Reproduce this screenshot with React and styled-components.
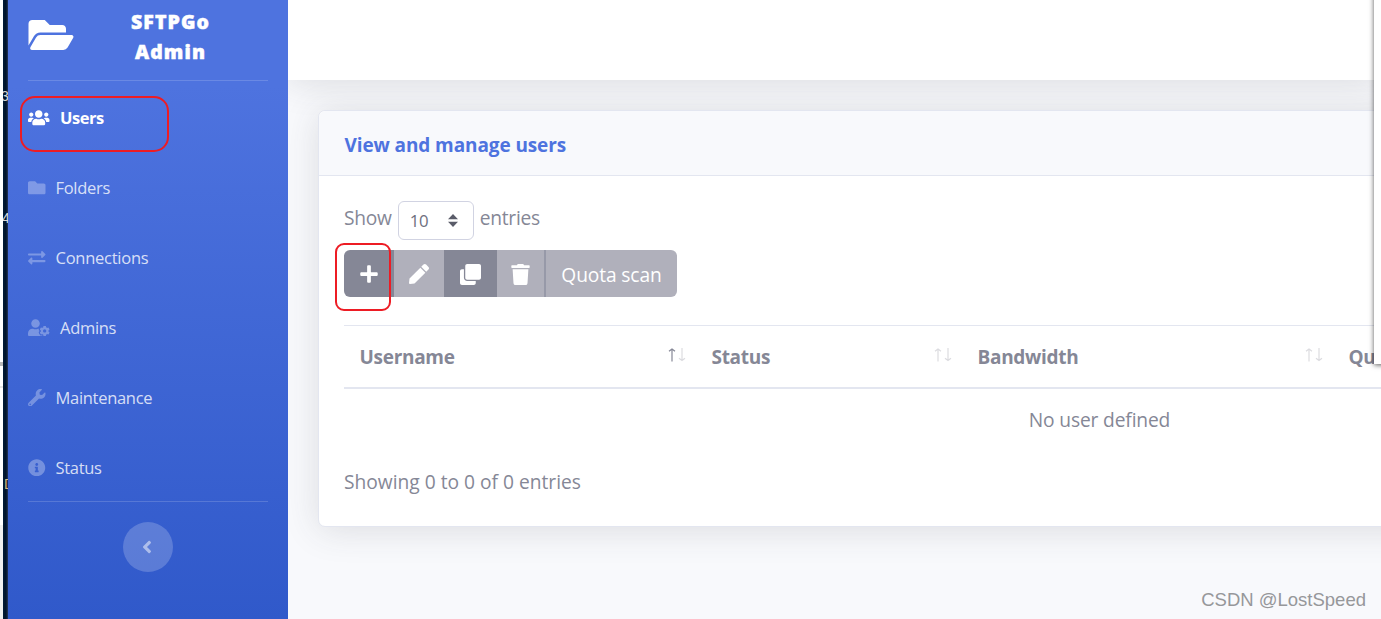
import React from "react";
import styled, { createGlobalStyle } from "styled-components";
import {
  FaFolderOpen, FaUsers, FaFolder, FaExchangeAlt, FaUserCog, FaWrench,
  FaInfoCircle, FaAngleLeft, FaPlus, FaPen, FaClone, FaTrash,
} from "react-icons/fa";

const Global = createGlobalStyle`
  * { box-sizing: border-box; }
  body { margin: 0; overflow: hidden; font-family: "Open Sans", "Noto Sans", sans-serif; color: #858796; }
  button { font: inherit; border: 0; padding: 0; }
`;

const Screen = styled.div`
  position: relative;
  display: flex;
  width: 1381px;
  height: 619px;
  overflow: hidden;
  background: #f8f9fc;
`;

const PageEdge = styled.div`
  display: flex;
  flex-direction: column;
  flex: 0 0 3px;
  background: #fff;
`;

const EdgeBlock = styled.div`
  height: ${(p) => p.$h}px;
  background: ${(p) => p.$bg};
`;

const Terminal = styled.div`
  position: relative;
  flex: 0 0 5px;
  overflow: hidden;
  background: linear-gradient(90deg, #001a38, #011328 60%, #26375c);
  color: #d8d8d8;
  font: 14px/16px "Liberation Sans", sans-serif;
`;

const Fragment = styled.span`
  position: absolute;
  top: ${(p) => p.$top}px;
  left: ${(p) => p.$left}px;
  color: ${(p) => p.$color || "#d8d8d8"};
`;

const Sidebar = styled.nav`
  flex: 0 0 280px;
  display: flex;
  flex-direction: column;
  padding: 0 20px;
  background: linear-gradient(180deg, #4e73df 85px, #3059ca 619px);
`;

const Brand = styled.div`
  display: flex;
  height: 80px;
  padding-top: 7px;
  color: #fff;
`;

const BrandName = styled.div`
  width: 125px;
  margin-left: 34px;
  text-align: center;
  font-size: 19.5px;
  line-height: 30px;
  font-weight: 800;
  letter-spacing: 1.1px;
  -webkit-text-stroke: 0.5px #fff;
`;

const BrandIcon = styled(FaFolderOpen)`
  width: 46px;
  height: 40px;
  margin-top: 8px;
`;

const Rule = styled.div`
  height: 1px;
  background: rgba(255, 255, 255, 0.16);
`;

const NavItem = styled.a`
  display: flex;
  align-items: center;
  gap: ${(p) => p.$gap}px;
  height: 70px;
  padding-bottom: 1px;
  font-size: 16.5px;
  letter-spacing: ${(p) => p.$ls}px;
  font-weight: ${(p) => (p.$active ? 700 : 400)};
  color: ${(p) => (p.$active ? "#fff" : "rgba(255,255,255,.8)")};
  svg {
    width: ${(p) => p.$icon}px;
    height: 17.5px;
    color: ${(p) => (p.$active ? "#fff" : "rgba(255,255,255,.3)")};
  }
`;

const NavList = styled.div`
  height: 420px;
  padding-top: 2px;
`;

const Collapse = styled.button`
  display: flex;
  align-items: center;
  justify-content: center;
  align-self: center;
  width: 50px;
  height: 50px;
  margin-top: 20px;
  padding-right: 2px;
  border-radius: 50%;
  background: rgba(255, 255, 255, 0.2);
  color: rgba(255, 255, 255, 0.5);
`;

const Main = styled.main`
  flex: 1;
  min-width: 0;
  overflow: hidden;
`;

const Topbar = styled.header`
  height: 80px;
  background: #fff;
  box-shadow: 0 3px 35px rgba(58, 59, 69, 0.15);
`;

const Card = styled.section`
  position: relative;
  width: 1562px;
  height: 417px;
  margin: 30px 0 0 30px;
  border: 1px solid #e3e6f0;
  border-radius: 7px;
  background: #fff;
  box-shadow: 0 3px 35px rgba(58, 59, 69, 0.15);
`;

const CardHeader = styled.h6`
  display: flex;
  align-items: center;
  height: 65px;
  margin: 0;
  padding: 3px 25px 0 25.5px;
  border-bottom: 1px solid #e3e6f0;
  border-radius: 7px 7px 0 0;
  background: #f8f9fc;
  color: #4e73df;
  font-size: 19px;
  letter-spacing: -0.1px;
`;

const CardBody = styled.div`
  padding: 25px;
  font-size: 19.2px;
`;

const Length = styled.label`
  display: flex;
  height: 39px;
  line-height: 34px;
  letter-spacing: -0.25px;
`;

const Select = styled.span`
  display: flex;
  align-items: center;
  justify-content: space-between;
  width: 76px;
  height: 39px;
  margin: 0 6px;
  padding: 0 15px 0 11px;
  border: 1px solid #d1d3e2;
  border-radius: 6px;
  color: #6e707e;
  font-size: 16.8px;
`;

const ButtonGroup = styled.div`
  display: flex;
  width: 333px;
  height: 47px;
  margin-top: 10px;
  border-radius: 6px;
  overflow: hidden;
  color: #fff;
`;

const ToolButton = styled.button`
  display: flex;
  align-items: center;
  justify-content: center;
  width: ${(p) => p.$w}px;
  padding-top: 1px;
  color: #fff;
  background: ${(p) => (p.$disabled ? "#b0b0bb" : "#858796")};
  border-left: ${(p) => (p.$line ? "2px solid #9799a8" : "0")};
  letter-spacing: -0.12px;
`;

const Table = styled.div`
  margin-top: 28px;
  border-top: 1px solid #e3e6f0;
`;

const HeadRow = styled.div`
  display: flex;
  height: 63px;
  border-bottom: 2px solid #e3e6f0;
`;

const HeadCell = styled.div`
  display: flex;
  justify-content: space-between;
  flex: 0 0 ${(p) => p.$w}px;
  padding: 0 10px 0 15.5px;
  line-height: 62px;
  font-size: 19px;
  font-weight: 700;
  letter-spacing: -0.3px;
`;

const EmptyRow = styled.div`
  height: 62px;
  line-height: 62px;
  padding-left: 1px;
  text-align: center;
  letter-spacing: -0.15px;
`;

const Info = styled.div`
  line-height: 62px;
`;

const SortIcon = styled.svg`
  width: 18px;
  height: 14px;
  margin-top: 22px;
`;

const Mark = styled.div`
  position: absolute;
  left: ${(p) => p.$x}px;
  top: ${(p) => p.$y}px;
  width: ${(p) => p.$w}px;
  height: ${(p) => p.$h}px;
  border: 2px solid #ed1c24;
  border-radius: ${(p) => p.$r}px;
`;

const FloatingPanel = styled.div`
  position: absolute;
  left: 1374px;
  top: -10px;
  width: 20px;
  height: 374px;
  background: #fff;
  box-shadow: 0 1px 5px rgba(0, 0, 0, 0.65);
`;

const Watermark = styled.div`
  position: absolute;
  right: 15px;
  top: 588px;
  font: 18.5px/24px "Liberation Sans", sans-serif;
  color: #96979a;
  white-space: nowrap;
`;

const Sort = ({ asc }) => (
  <SortIcon viewBox="0 0 18 14" fill="none">
    <path d="M4 13.5V1M1 3.3L4 1L7 3.3" stroke={asc ? "#858796" : "#dcdce0"} strokeWidth="1.2" />
    <path d="M14 0V12.5M11 10.2L14 12.5L17 10.2" stroke="#dcdce0" strokeWidth="1.2" />
  </SortIcon>
);

const NAV = [
  { label: "Users", Icon: FaUsers, icon: 21.5, gap: 10.5, ls: -0.5, active: true },
  { label: "Folders", Icon: FaFolder, icon: 17.5, gap: 10, ls: -0.3 },
  { label: "Connections", Icon: FaExchangeAlt, icon: 17.5, gap: 10, ls: -0.25 },
  { label: "Admins", Icon: FaUserCog, icon: 21.5, gap: 10.5, ls: -0.3 },
  { label: "Maintenance", Icon: FaWrench, icon: 17.5, gap: 10, ls: -0.3 },
  { label: "Status", Icon: FaInfoCircle, icon: 17.5, gap: 10, ls: -0.3 },
];

export default function App() {
  return (
    <Screen>
      <Global />
      <PageEdge>
        <EdgeBlock $h={362} $bg="#fff" />
        <EdgeBlock $h={4} $bg="#b9b9b9" />
        <EdgeBlock $h={20} $bg="#fff" />
        <EdgeBlock $h={2} $bg="#e6e6e6" />
        <EdgeBlock $h={137} $bg="#fff" />
        <EdgeBlock $h={94} $bg="#f0f0f0" />
      </PageEdge>
      <Terminal>
        <Fragment $top={88} $left={-2}>3</Fragment>
        <Fragment $top={210} $left={-1}>4</Fragment>
        <Fragment $top={476} $left={1} $color="#d5b67a">D</Fragment>
      </Terminal>
      <Sidebar>
        <Brand>
          <BrandIcon />
          <BrandName>SFTPGo Admin</BrandName>
        </Brand>
        <Rule />
        <NavList>
          {NAV.map(({ label, Icon, icon, gap, active, ls }) => (
            <NavItem key={label} $icon={icon} $gap={gap} $active={active} $ls={ls}>
              <Icon />
              {label}
            </NavItem>
          ))}
        </NavList>
        <Rule />
        <Collapse><FaAngleLeft size={20} /></Collapse>
      </Sidebar>
      <Main>
        <Topbar />
        <Card>
          <CardHeader>View and manage users</CardHeader>
          <CardBody>
            <Length>
              Show
              <Select>
                10
                <svg width="10" height="13" viewBox="0 0 10 13" fill="#5a5c69">
                  <path d="M5 0L10 5.3H0ZM5 13L0 7.7H10Z" />
                </svg>
              </Select>
              entries
            </Length>
            <ButtonGroup>
              <ToolButton $w={50}><FaPlus size={20} /></ToolButton>
              <ToolButton $w={50} $disabled><FaPen size={20} /></ToolButton>
              <ToolButton $w={53}><FaClone size={21} /></ToolButton>
              <ToolButton $w={47} $disabled><FaTrash size={21} /></ToolButton>
              <ToolButton $w={133} $disabled $line>Quota scan</ToolButton>
            </ButtonGroup>
            <Table>
              <HeadRow>
                <HeadCell $w={352}>Username<Sort asc /></HeadCell>
                <HeadCell $w={266}>Status<Sort /></HeadCell>
                <HeadCell $w={371}>Bandwidth<Sort /></HeadCell>
                <HeadCell $w={521}>Quota<Sort /></HeadCell>
              </HeadRow>
              <EmptyRow>No user defined</EmptyRow>
            </Table>
            <Info>Showing 0 to 0 of 0 entries</Info>
          </CardBody>
        </Card>
      </Main>
      <FloatingPanel />
      <Mark $x={20} $y={96} $w={149} $h={56} $r={15} />
      <Mark $x={335} $y={243} $w={56} $h={68} $r={9} />
      <Watermark>CSDN @LostSpeed</Watermark>
    </Screen>
  );
}
